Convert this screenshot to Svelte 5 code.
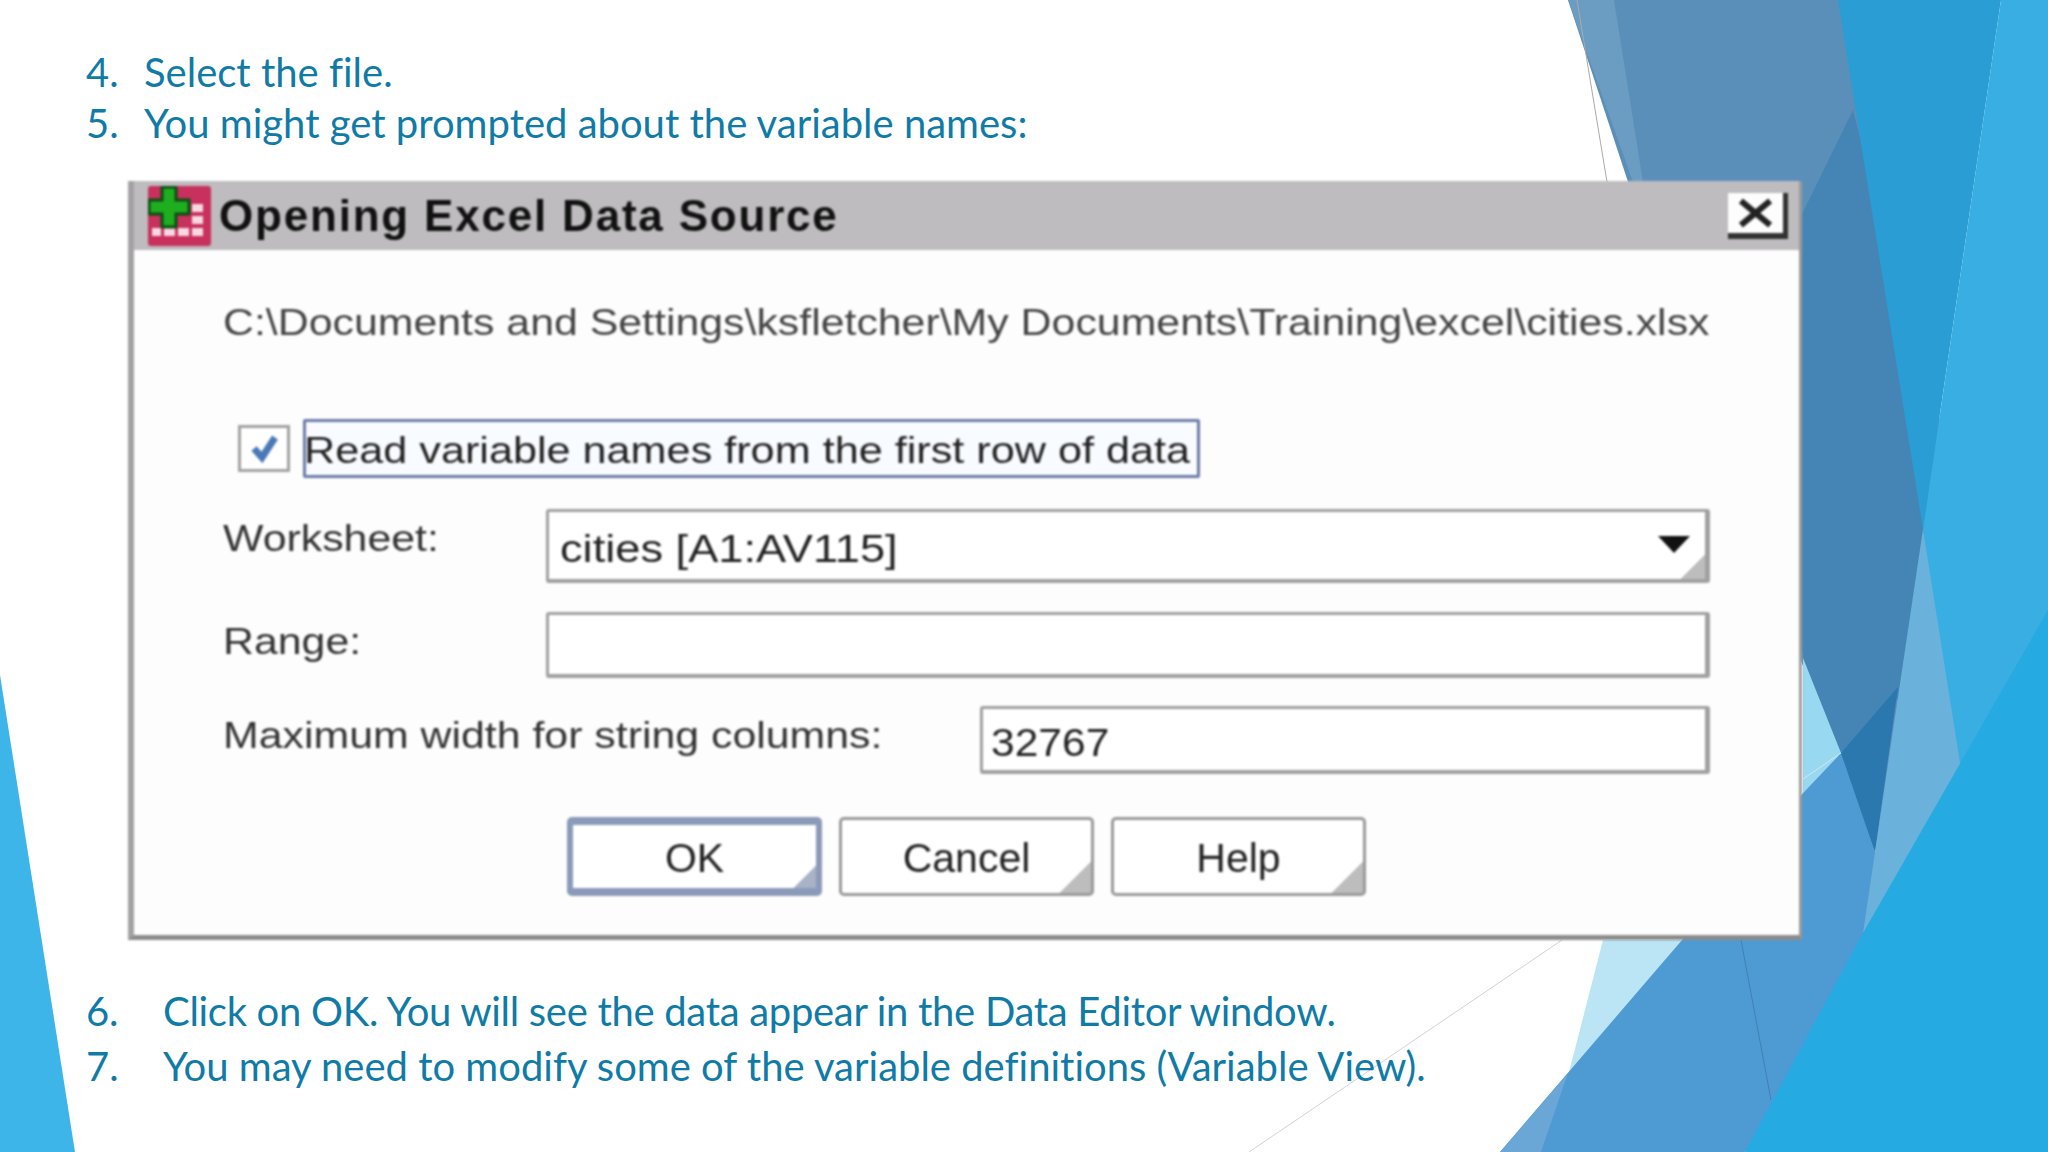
<script>
  const topSteps = [
    { n: '4.', text: 'Select the file.' },
    { n: '5.', text: 'You might get prompted about the variable names:' }
  ]
  const bottomSteps = [
    { n: '6.', text: 'Click on OK. You will see the data appear in the Data Editor window.', tight: true },
    { n: '7.', text: 'You may need to modify some of the variable definitions (Variable View).' }
  ]
  const shapes = [
    { fill: '#5a8fb9', points: '1568,0 1900,0 1950,529 1875,852 1700,400' },
    { fill: '#6b9cc2', points: '1568,0 1614,0 1643,182 1633,182' },
    { fill: '#4585b5', points: '1853,110 1960,529 1910,687 1841,753 1803,658 1760,300' },
    { fill: '#2a9dd4', points: '1838,0 2001,0 1923,529' },
    { fill: '#39aee2', points: '2001,0 2048,0 2048,800 1960,800 1923,529' },
    { fill: '#98d8f0', points: '1803,658 1841,753 1803,793' },
    { fill: '#bbe5f4', points: '1603,940 1682,940 1568,1076' },
    { fill: '#4e9ad2', points: '1841,753 1875,852 1900,960 1745,1152 1500,1152 1682,940 1803,793' },
    { fill: '#6aa6d6', points: '1568,1073 1500,1152 1541,1152' },
    { fill: '#2a78ae', points: '1841,753 1898,687 1875,852' },
    { fill: '#6ab1dc', points: '1923,529 1960,763 1975,830 1863,933 1875,852' },
    { fill: '#25aae2', points: '2048,610 1863,933 1745,1152 2048,1152' },
    { fill: '#3db5e8', points: '0,675 75,1152 0,1152' }
  ]
</script>

<div class="slide">
  <svg class="bg" viewBox="0 0 2048 1152" aria-hidden="true">
    {#each shapes as s}
      <polygon points={s.points} fill={s.fill} />
    {/each}
    <line x1="1577" y1="0" x2="1607" y2="182" stroke="#a9a9a9" />
    <line x1="1562" y1="940" x2="1249" y2="1152" stroke="#d2d2d2" />
    <line x1="1741" y1="940" x2="1771" y2="1100" stroke="#3f80b4" />
    <line x1="1803" y1="779" x2="1841" y2="753" stroke="#d2e6f0" />
  </svg>

  <div class="steps top">
    {#each topSteps as s}
      <div class="step"><span class="num">{s.n}</span><span>{s.text}</span></div>
    {/each}
  </div>

  <div class="dialog">
    <div class="titlebar">
      <svg class="appicon" viewBox="0 0 63 60" aria-hidden="true">
        <rect width="63" height="60" rx="3" fill="#c8305e" />
        <g fill="#f8d8e2">
          <rect x="44" y="18" width="11" height="8" />
          <rect x="44" y="30" width="11" height="8" />
          <rect x="44" y="42" width="11" height="8" />
          <rect x="30" y="42" width="11" height="8" />
          <rect x="16" y="42" width="11" height="8" />
          <rect x="4" y="42" width="9" height="8" />
        </g>
        <path d="M14 1h14v13h13v14H28v13H14V28H1V14h13z" fill="#1fae1f" stroke="#0b4d12" stroke-width="3" />
      </svg>
      <span class="title">Opening Excel Data Source</span>
      <button class="close" aria-label="Close">
        <svg viewBox="0 0 32 24"><path d="M4 2l24 20M28 2L4 22" stroke="#222" stroke-width="5" /></svg>
      </button>
    </div>

    <div class="body">
      <div class="path"><span class="wide">C:\Documents and Settings\ksfletcher\My Documents\Training\excel\cities.xlsx</span></div>

      <div class="check-row">
        <span class="checkbox">
          <svg viewBox="0 0 32 30"><path d="M6 15l8 9L27 4" fill="none" stroke="#4a78b8" stroke-width="7" /></svg>
        </span>
        <span class="check-label"><span class="wide">Read variable names from the first row of data</span></span>
      </div>

      <div class="row first">
        <span class="label worksheet"><span class="wide">Worksheet:</span></span>
        <div class="field combo">
          <span class="wide">cities [A1:AV115]</span>
          <span class="arrow"></span>
        </div>
      </div>

      <div class="row second">
        <span class="label worksheet"><span class="wide">Range:</span></span>
        <div class="field range"></div>
      </div>

      <div class="row third">
        <span class="label width"><span class="wide">Maximum width for string columns:</span></span>
        <div class="field number"><span class="wide">32767</span></div>
      </div>

      <div class="buttons">
        <button class="btn ok">OK</button>
        <button class="btn">Cancel</button>
        <button class="btn">Help</button>
      </div>
    </div>
  </div>

  <div class="steps bottom">
    {#each bottomSteps as s}
      <div class="step" class:tight={s.tight}><span class="num">{s.n}</span><span>{s.text}</span></div>
    {/each}
  </div>
</div>

<style>
  :global(body) {
    margin: 0;
    background: #fff;
  }

  .slide {
    position: relative;
    width: 2048px;
    height: 1152px;
    overflow: hidden;
    background: #fff;
    box-sizing: border-box;
    padding-top: 47px;
  }

  .bg {
    position: absolute;
    inset: 0;
    width: 2048px;
    height: 1152px;
  }

  .steps {
    position: relative;
    margin-left: 86px;
    font-family: Lato, "Open Sans", sans-serif;
    font-size: 40px;
    font-variant-ligatures: none;
    color: #0f7ba6;
  }

  .step {
    display: flex;
  }

  .top .step {
    height: 51px;
    line-height: 51px;
  }

  .top .num {
    width: 58px;
  }

  .bottom {
    margin-top: 44px;
  }

  .bottom .step {
    height: 55px;
    line-height: 55px;
  }

  .bottom .num {
    width: 77px;
  }

  .tight {
    letter-spacing: -0.3px;
  }

  .dialog {
    position: relative;
    box-sizing: border-box;
    width: 1674px;
    height: 759px;
    margin: 32px 0 0 128px;
    background: #fefdfe;
    border-left: 6px solid #a3a1a3;
    border-right: 3px solid #9a9a9a;
    border-bottom: 5px solid #8c8c8c;
    font-family: "Liberation Sans", Arial, sans-serif;
    color: #333;
    filter: blur(1.3px);
  }

  /* the source is a stretched bitmap, its text runs wider than it is tall */
  .wide {
    display: inline-block;
    transform: scaleX(1.19);
    transform-origin: left center;
  }

  .titlebar {
    display: flex;
    align-items: center;
    height: 69px;
    padding-left: 14px;
    padding-right: 11px;
    background: #bebcbe;
  }

  .appicon {
    width: 63px;
    height: 60px;
    flex: none;
  }

  .title {
    margin-left: 8px;
    font-size: 44px;
    font-weight: bold;
    color: #111;
    letter-spacing: 1.8px;
    white-space: nowrap;
  }

  .close {
    margin-left: auto;
    box-sizing: border-box;
    width: 60px;
    height: 46px;
    padding: 4px 8px;
    background: #fdfdfd;
    border: 0;
    border-right: 5px solid #333;
    border-bottom: 6px solid #333;
  }

  .close svg {
    display: block;
    width: 100%;
    height: 100%;
  }

  .body {
    padding-left: 89px;
  }

  .path {
    margin-top: 47px;
    height: 50px;
    line-height: 52px;
    font-size: 36px;
    white-space: nowrap;
    color: #444;
  }

  .check-row {
    display: flex;
    align-items: center;
    margin-top: 72px;
    height: 59px;
  }

  .checkbox {
    box-sizing: border-box;
    width: 52px;
    height: 47px;
    margin-left: 15px;
    padding: 5px 7px;
    background: #fff;
    border: 3px solid #a2a2a2;
  }

  .checkbox svg {
    display: block;
    width: 100%;
    height: 100%;
  }

  .check-label {
    box-sizing: border-box;
    width: 897px;
    height: 59px;
    line-height: 58px;
    margin-left: 13px;
    font-size: 36px;
    color: #222;
    white-space: nowrap;
    background: #f8fbff;
    border: 3px solid #6c7ca8;
    border-radius: 2px;
  }

  .check-label .wide {
    margin-left: -2px;
    transform: scaleX(1.2);
  }

  .row {
    display: flex;
    align-items: flex-start;
  }

  .first {
    margin-top: 31px;
  }

  .second {
    margin-top: 29px;
  }

  .third {
    margin-top: 28px;
  }

  .label {
    flex: none;
    line-height: 59px;
    font-size: 36px;
    color: #333;
    white-space: nowrap;
  }

  .worksheet {
    width: 323px;
  }

  .width {
    width: 757px;
  }

  .field {
    box-sizing: border-box;
    width: 1164px;
    font-size: 38px;
    color: #222;
    background: #fff;
    border: 3px solid #a0a0a0;
    border-width: 3px 5px 4px 3px;
    border-radius: 3px;
  }

  .combo {
    display: flex;
    align-items: center;
    justify-content: space-between;
    height: 74px;
    padding: 7px 15px 0 11px;
    background: linear-gradient(-45deg, #bdbdbd 17px, #fff 17px);
  }

  .arrow {
    margin-top: -10px;
    border-left: 16px solid transparent;
    border-right: 16px solid transparent;
    border-top: 17px solid #111;
  }

  .range {
    height: 66px;
  }

  .number {
    width: 730px;
    height: 68px;
    line-height: 68px;
    padding-left: 8px;
  }

  .number .wide {
    transform: scaleX(1.12);
  }

  .buttons {
    display: flex;
    gap: 17px;
    margin: 43px 0 0 344px;
  }

  .btn {
    box-sizing: border-box;
    width: 255px;
    height: 79px;
    padding: 3px 0 0;
    font-family: inherit;
    font-size: 41px;
    color: #222;
    background: linear-gradient(-45deg, #bdbdbd 22px, #fff 22px);
    border: 3px solid #9a9a9a;
    border-radius: 5px;
  }

  .ok {
    background: linear-gradient(-45deg, #a9b2c6 16px, #fff 16px);
    border: 6px solid #8a9ab8;
    border-top-width: 8px;
    border-bottom-width: 8px;
  }
</style>
